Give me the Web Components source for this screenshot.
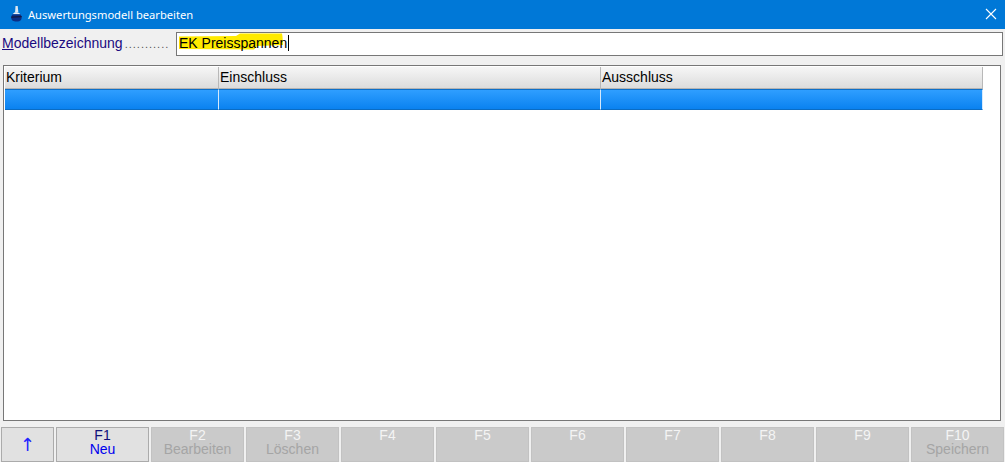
<!DOCTYPE html>
<html>
<head>
<meta charset="utf-8">
<title>Auswertungsmodell bearbeiten</title>
<style>
    html, body { margin: 0; padding: 0; background: #f0f0f0; }
</style>
</head>
<body>
<model-window>
    <title-bar>Auswertungsmodell bearbeiten</title-bar>
    <model-field label="Modellbezeichnung" value="EK Preisspannen"></model-field>
    <criteria-table></criteria-table>
    <fkey-bar>
        <fkey-button arrow>↑</fkey-button>
        <fkey-button key="F1" text="Neu"></fkey-button>
        <fkey-button key="F2" text="Bearbeiten" disabled></fkey-button>
        <fkey-button key="F3" text="Löschen" disabled></fkey-button>
        <fkey-button key="F4" disabled></fkey-button>
        <fkey-button key="F5" disabled></fkey-button>
        <fkey-button key="F6" disabled></fkey-button>
        <fkey-button key="F7" disabled></fkey-button>
        <fkey-button key="F8" disabled></fkey-button>
        <fkey-button key="F9" disabled></fkey-button>
        <fkey-button key="F10" text="Speichern" disabled></fkey-button>
    </fkey-bar>
</model-window>

<script>
class ModelWindow extends HTMLElement {
    constructor() {
        super();
        this.attachShadow({ mode: 'open' });
        this.shadowRoot.innerHTML = `
            <style>
                :host {
                    display: flex;
                    flex-direction: column;
                    width: 1005px;
                    height: 462px;
                    overflow: hidden;
                    background: #f0f0f0;
                    font-family: "Liberation Sans", Arial, sans-serif;
                }
            </style>
            <slot></slot>
        `;
    }
}

class TitleBar extends HTMLElement {
    constructor() {
        super();
        this.attachShadow({ mode: 'open' });
        this.shadowRoot.innerHTML = `
            <style>
                :host {
                    display: flex;
                    align-items: center;
                    flex: none;
                    height: 29px;
                    padding: 0 8px 1px 9px;
                    box-sizing: border-box;
                    background: #0078d7;
                    color: #fff;
                    font: 11.15px "Noto Sans", "Open Sans", sans-serif;
                }
                .icon { width: 14px; height: 18px; margin-right: 5px; flex: none; }
                .text { flex: 1; }
                .close { width: 12px; height: 12px; flex: none; }
            </style>
            <svg class="icon" viewBox="0 0 14 18">
                <path d="M6.5 1h2.200l.6 6-1.800.6-1.400-.6z" fill="#dfe8f2"/>
                <path d="M3.600 9.200C4.600 7.600 6 7 7.800 7.200c1.800.3 3.200 1.100 3.600 2.400z" fill="#e8eef6"/>
                <path d="M2.200 12c.2-1.300.7-2.200 1.400-2.800h7.800c.9.900 1.300 2.400 1.200 4-.1 2-1.700 3.200-3.800 3.200H6.200c-2.400 0-4.300-1.800-4-4.400z" fill="#0b2f86"/>
                <path d="M2.400 11.500l10.300-.5v1.200l-10.500.5z" fill="#16183f"/>
            </svg>
            <span class="text"><slot></slot></span>
            <svg class="close" viewBox="0 0 12 12">
                <path d="M1 1l10 10M11 1L1 11" stroke="#fff" stroke-width="1.100" fill="none"/>
            </svg>
        `;
    }
}

class ModelField extends HTMLElement {
    constructor() {
        super();
        this.attachShadow({ mode: 'open' });
        const label = this.getAttribute('label');
        this.shadowRoot.innerHTML = `
            <style>
                :host {
                    display: flex;
                    align-items: center;
                    flex: none;
                    height: 24px;
                    margin: 3px 2px 0 3px;
                    font-size: 14px;
                    color: #000;
                }
                .label { width: 173px; flex: none; color: #1a0a80; white-space: nowrap; padding-bottom: 2px; margin-left: -1px; margin-right: 1px; }
                .label u { text-decoration-thickness: 1px; }
                .dots { color: #555; font-size: 11px; letter-spacing: 1px; margin-left: 2px; }
                .input {
                    position: relative;
                    flex: 1;
                    height: 24px;
                    box-sizing: border-box;
                    border: 1px solid #777;
                    background: #fff;
                    display: flex;
                    align-items: center;
                    padding: 0 0 2px 2px;
                }
                .marker { position: absolute; left: 1px; top: 0; width: 108px; height: 18px; }
                .value { position: relative; white-space: nowrap; }
                .caret { position: relative; width: 1px; height: 16px; background: #000; margin-left: 1px; }
            </style>
            <span class="label"><u>${label[0]}</u>${label.slice(1)}<span class="dots">...........</span></span>
            <div class="input">
                <svg class="marker" viewBox="0 0 108 18">
                    <path d="M1 3.500L58 3 62 .5 104 .5l.5 3 .5 8.500-26 1-3 3.500L1 16z" fill="#ffea00"/>
                </svg>
                <span class="value">${this.getAttribute('value')}</span>
                <span class="caret"></span>
            </div>
        `;
    }
}

class CriteriaTable extends HTMLElement {
    constructor() {
        super();
        this.attachShadow({ mode: 'open' });
        this.shadowRoot.innerHTML = `
            <style>
                :host {
                    display: block;
                    flex: none;
                    height: 356px;
                    margin: 9px 4px 0 3px;
                    box-sizing: border-box;
                    border: 1px solid #777;
                    padding: 1px 0 0 1px;
                    background: #fff;
                    font-size: 14px;
                    color: #000;
                }
                .grid { display: grid; grid-template-columns: 214px 382px 382px; width: 978px; }
                .head {
                    height: 22px;
                    box-sizing: border-box;
                    padding: 2px 0 0 1px;
                    line-height: 16px;
                    background: linear-gradient(#f6f6f6, #dcdcdc);
                    border-right: 1px solid #b8b8b8;
                    border-bottom: 1px solid #b4b4b4;
                }
                .cell {
                    height: 21px;
                    box-sizing: border-box;
                    background: linear-gradient(#2f9eff, #0a82f0);
                    border-top: 1px solid #0d6fc8;
                    border-bottom: 1px solid #0a6cc4;
                    border-right: 1px solid #d6e9fb;
                }
            </style>
            <div class="grid">
                <div class="head">Kriterium</div>
                <div class="head">Einschluss</div>
                <div class="head">Ausschluss</div>
                <div class="cell"></div>
                <div class="cell"></div>
                <div class="cell"></div>
            </div>
        `;
    }
}

class FkeyBar extends HTMLElement {
    constructor() {
        super();
        this.attachShadow({ mode: 'open' });
        this.shadowRoot.innerHTML = `
            <style>
                :host {
                    display: flex;
                    flex: none;
                    gap: 2px;
                    height: 35px;
                    margin: 6px 0 0 1px;
                }
            </style>
            <slot></slot>
        `;
    }
}

class FkeyButton extends HTMLElement {
    constructor() {
        super();
        this.attachShadow({ mode: 'open' });
        const key = this.getAttribute('key') || '';
        const text = this.getAttribute('text') || '';
        this.shadowRoot.innerHTML = `
            <style>
                :host {
                    display: flex;
                    flex-direction: column;
                    align-items: center;
                    flex: none;
                    width: 93px;
                    height: 35px;
                    box-sizing: border-box;
                    border: 1px solid #ababab;
                    background: #e1e1e1;
                    font-size: 14px;
                    line-height: 14px;
                    color: #0000ee;
                }
                :host([arrow]) {
                    width: 53px;
                    justify-content: center;
                    font: 18px/18px "DejaVu Sans", sans-serif;
                    color: #2222ff;
                }
                :host([disabled]) { background: #cacaca; border-color: #c2c2c2; color: #a5a5a5; }
                .key { color: #10107a; }
                :host([disabled]) .key { color: #f4f4f4; }
            </style>
            ${key ? `<span class="key">${key}</span><span>${text}</span>` : '<slot></slot>'}
        `;
    }
}

customElements.define('model-window', ModelWindow);
customElements.define('title-bar', TitleBar);
customElements.define('model-field', ModelField);
customElements.define('criteria-table', CriteriaTable);
customElements.define('fkey-bar', FkeyBar);
customElements.define('fkey-button', FkeyButton);
</script>
</body>
</html>
